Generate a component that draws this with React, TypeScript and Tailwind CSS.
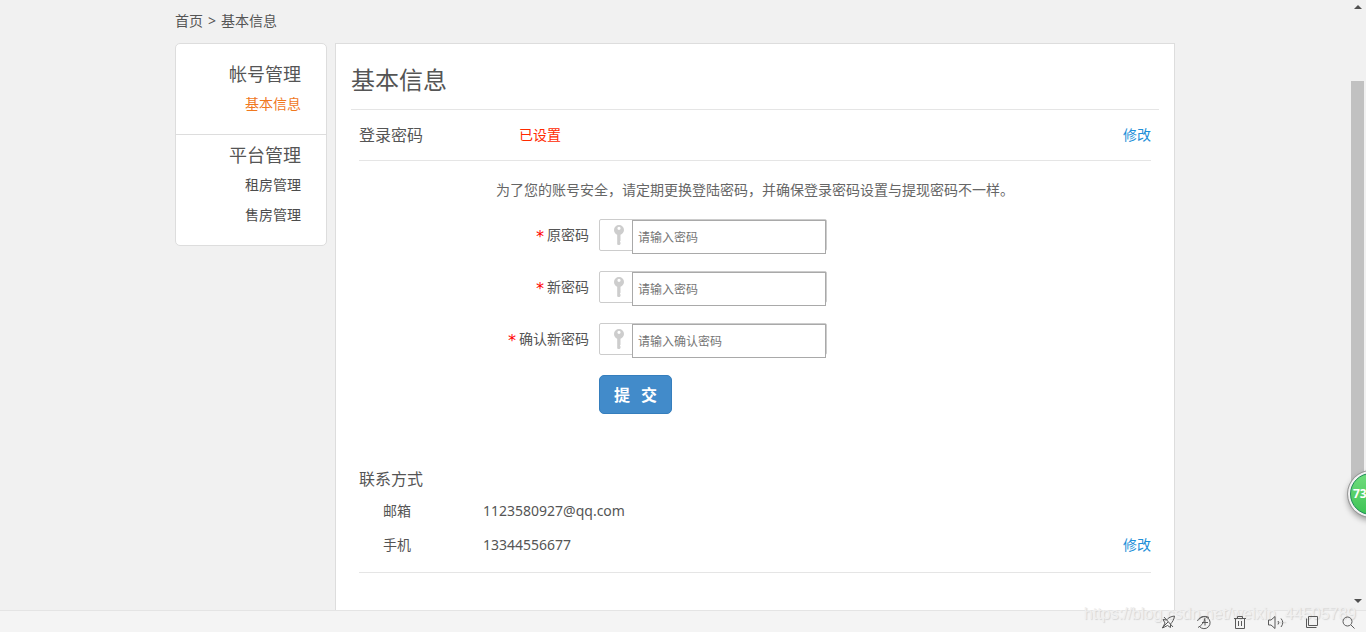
import { FormEvent, ReactNode, useState } from "react";

type MenuGroup = {
  title: string;
  items: string[];
}

type PasswordFieldProps = {
  id: string;
  label: string;
  placeholder: string;
  value: string;
  onChange: (id: string, value: string) => void;
}

const menu: MenuGroup[] = [
  { title: "帐号管理", items: ["基本信息"] },
  { title: "平台管理", items: ["租房管理", "售房管理"] },
];

const fields = [
  { id: "oldPassword", label: "原密码", placeholder: "请输入密码" },
  { id: "newPassword", label: "新密码", placeholder: "请输入密码" },
  { id: "confirmPassword", label: "确认新密码", placeholder: "请输入确认密码" },
];

const KeyIcon = () => (
  <svg className="w-3 h-5" viewBox="0 0 12 20" aria-hidden="true">
    <path fill="#cdcdcd" fillRule="evenodd" d="M6 0a5 5 0 0 0-5 5c0 2.200 1.200 3.800 3.200 4.800V19.400L5.400 20h1.200l.9-1v-1.600l-.6-.8.6-.8V9.800C9.600 8.800 11 7.200 11 5a5 5 0 0 0-5-5zM6 1.700a1.600 1.600 0 1 1 0 3.200a1.600 1.600 0 0 1 0-3.200z" />
  </svg>
);

const PasswordField = ({ id, label, placeholder, value, onChange }: PasswordFieldProps) => (
  <div className="flex gap-2.5">
    <label className="flex w-[230px] h-8 items-center justify-end gap-0.5" htmlFor={id}>
      <span className="pt-1 font-['DejaVu_Sans_Mono',monospace] text-base leading-4 text-[#f00]">*</span>
      {label}
    </label>
    <div className="flex w-[228px] h-8 border border-[#ccc] rounded-xs">
      <span className="flex w-8 shrink-0 items-center justify-center pl-1.5">
        <KeyIcon />
      </span>
      <input
        className="flex-1 min-w-0 h-[34px] px-[5px] border border-[#a9a9a9] bg-white text-xs placeholder:text-[#757575] focus:outline-none"
        id={id}
        type="password"
        placeholder={placeholder}
        value={value}
        onChange={(e) => onChange(id, e.target.value)}
      />
    </div>
  </div>
);

const Sidebar = () => (
  <nav className="w-[152px] shrink-0 self-start bg-white border border-[#ddd] rounded-[5px] text-right">
    {menu.map((group, index) => (
      <div className={index === 0 ? "pt-[15px] pb-[15px] pr-[25px]" : "border-t border-[#ddd] pt-[5px] pb-[15px] pr-[25px]"} key={group.title}>
        <h3 className="text-lg leading-[30px]">{group.title}</h3>
        <ul>
          {group.items.map((item) => (
            <li className="leading-[30px]" key={item}>
              <a className={item === "基本信息" ? "text-[#f0781e]" : "text-[#4c4c4c]"} href="#">{item}</a>
            </li>
          ))}
        </ul>
      </div>
    ))}
  </nav>
);

const PasswordForm = () => {
  const [values, setValues] = useState<Record<string, string>>({});

  const handleOnChange = (id: string, value: string) => setValues({ ...values, [id]: value });
  const handleOnSubmit = (e: FormEvent<HTMLFormElement>) => e.preventDefault();

  return (
    <form className="flex flex-col gap-5" onSubmit={handleOnSubmit}>
      {fields.map((field) => (
        <PasswordField key={field.id} {...field} value={values[field.id] ?? ""} onChange={handleOnChange} />
      ))}
      <button className="flex self-start ml-60 h-[39px] items-center gap-[11px] px-3.5 bg-[#428bca] border border-[#357ebd] rounded-[5px] text-base font-bold text-white" type="submit">
        <span>提</span>
        <span>交</span>
      </button>
    </form>
  );
}

const ContactRow = ({ label, value, action }: { label: string; value: string; action?: ReactNode }) => (
  <div className="flex h-[34px] items-center pl-6">
    <span className="w-[100px]">{label}</span>
    <span>{value}</span>
    {action}
  </div>
);

const EditLink = () => <a className="ml-auto text-[#1e90d8]" href="#">修改</a>;

const ScrollBar = () => (
  <div className="flex flex-col w-4 shrink-0 items-center pt-[5px] pb-[7px]" aria-hidden="true">
    <svg className="w-2 h-1" viewBox="0 0 8 4"><path fill="#505050" d="M4 0 8 4H0z" /></svg>
    <div className="flex flex-col flex-1 w-full pt-[72px]">
      <div className="w-[13px] h-4/5 ml-px bg-[#c1c1c1]" />
    </div>
    <svg className="w-2 h-1" viewBox="0 0 8 4"><path fill="#505050" d="M0 0H8L4 4z" /></svg>
  </div>
);

const StatusBar = () => (
  <footer className="flex h-[22px] shrink-0 items-center justify-end gap-5 pr-2.5 bg-[#f4f4f4] border-t border-[#e4e4e4] text-[#5a5a5a]">
    <svg className="z-10 size-4" viewBox="0 0 16 16" fill="none" stroke="currentColor"><path d="M14.500 2C11 2.500 8.500 3.500 6.500 6L3 5.500l2 3.500-2.500 5L7.500 11.500l3 2V10C12.500 8 14 5.500 14.500 2zM4 3l9 10M2 14l6-6" /></svg>
    <svg className="z-10 size-4" viewBox="0 0 16 16" fill="none" stroke="currentColor"><path d="M3.500 12.500A6 6 0 1 0 3 5.500M2 13.500C5 12 8.500 8.500 9 4M1.500 7C3 3 8 1 13 3.500M6 8.500h6M9 5.500v6" /></svg>
    <svg className="z-10 size-4" viewBox="0 0 16 16" fill="none" stroke="currentColor"><path d="M2 4.500h12M5.500 4.500v-2h5v2M3.500 4.500v10h9v-10M6.500 7v5M9.500 7v5" /></svg>
    <svg className="z-10 size-4" viewBox="0 0 16 16" fill="none" stroke="currentColor"><path d="M.5 6H3l4-3.500v12L3 11H.5zM10 7q1.500 1.500 0 3.500M13 4.500q3.500 4 0 8.500" /></svg>
    <svg className="z-10 size-4" viewBox="0 0 16 16" fill="none" stroke="currentColor"><path d="M4.500 2.500h9v9h-9zM2.500 4.500v9h10" /></svg>
    <svg className="z-10 size-4" viewBox="0 0 16 16" fill="none" stroke="currentColor"><circle cx="7.500" cy="7.500" r="4.500" /><path d="m11 11 3.500 3.500" /></svg>
  </footer>
);

const App = () => {
  return (
    <div className="relative flex flex-col h-screen overflow-hidden bg-[#f1f1f1] font-['Noto_Sans','Noto_Sans_CJK_SC',sans-serif] text-sm text-[#555]">
      <div className="flex flex-1 min-h-0">
        <div className="flex-1 min-w-0 overflow-hidden">
          <div className="max-w-[1000px] mx-auto">
            <div className="flex h-[43px] items-center gap-[5px] pb-0.5">
              <a href="#">首页</a>
              <span>&gt;</span>
              <span>基本信息</span>
            </div>
            <div className="flex gap-2">
              <Sidebar />
              <main className="flex-1 min-w-0 px-[15px] pb-20 bg-white border border-[#ddd]">
                <h1 className="pt-4 pb-[9px] border-b border-[#e5e5e5] text-2xl leading-10">基本信息</h1>
                <div className="px-2">
                  <div className="flex h-[51px] items-center border-b border-[#e5e5e5]">
                    <h2 className="w-40 text-base">登录密码</h2>
                    <span className="text-[#ff2a00]">已设置</span>
                    <EditLink />
                  </div>
                  <p className="py-3.5 text-center leading-[30px] text-[#666]">为了您的账号安全，请定期更换登陆密码，并确保登录密码设置与提现密码不一样。</p>
                  <PasswordForm />
                  <section className="mt-[50px] pb-2.5 border-b border-[#e5e5e5]">
                    <h2 className="text-base leading-[30px]">联系方式</h2>
                    <ContactRow label="邮箱" value="1123580927@qq.com" />
                    <ContactRow label="手机" value="13344556677" action={<EditLink />} />
                  </section>
                </div>
              </main>
            </div>
          </div>
        </div>
        <ScrollBar />
      </div>
      <StatusBar />
      <div className="absolute -right-7 bottom-[115px] size-[46px] p-0.5 bg-[#f2f2f2] rounded-full outline outline-[#999] shadow-[0_3px_6px_rgba(0,0,0,0.4)]">
        <div className="flex size-full items-center pl-0.5 bg-linear-to-b from-[#6fdc7c] to-[#3cc455] border border-[#1f8a5a] rounded-full text-xs font-bold text-white">73</div>
      </div>
      <span className="absolute right-2.5 bottom-1.5 font-['Liberation_Sans',sans-serif] text-base text-[#f0f0f0] text-shadow-[1px_1px_1px_#d4d4d4] pointer-events-none">https://blog.csdn.net/weixin_44505789</span>
    </div>
  );
}

export default App;
